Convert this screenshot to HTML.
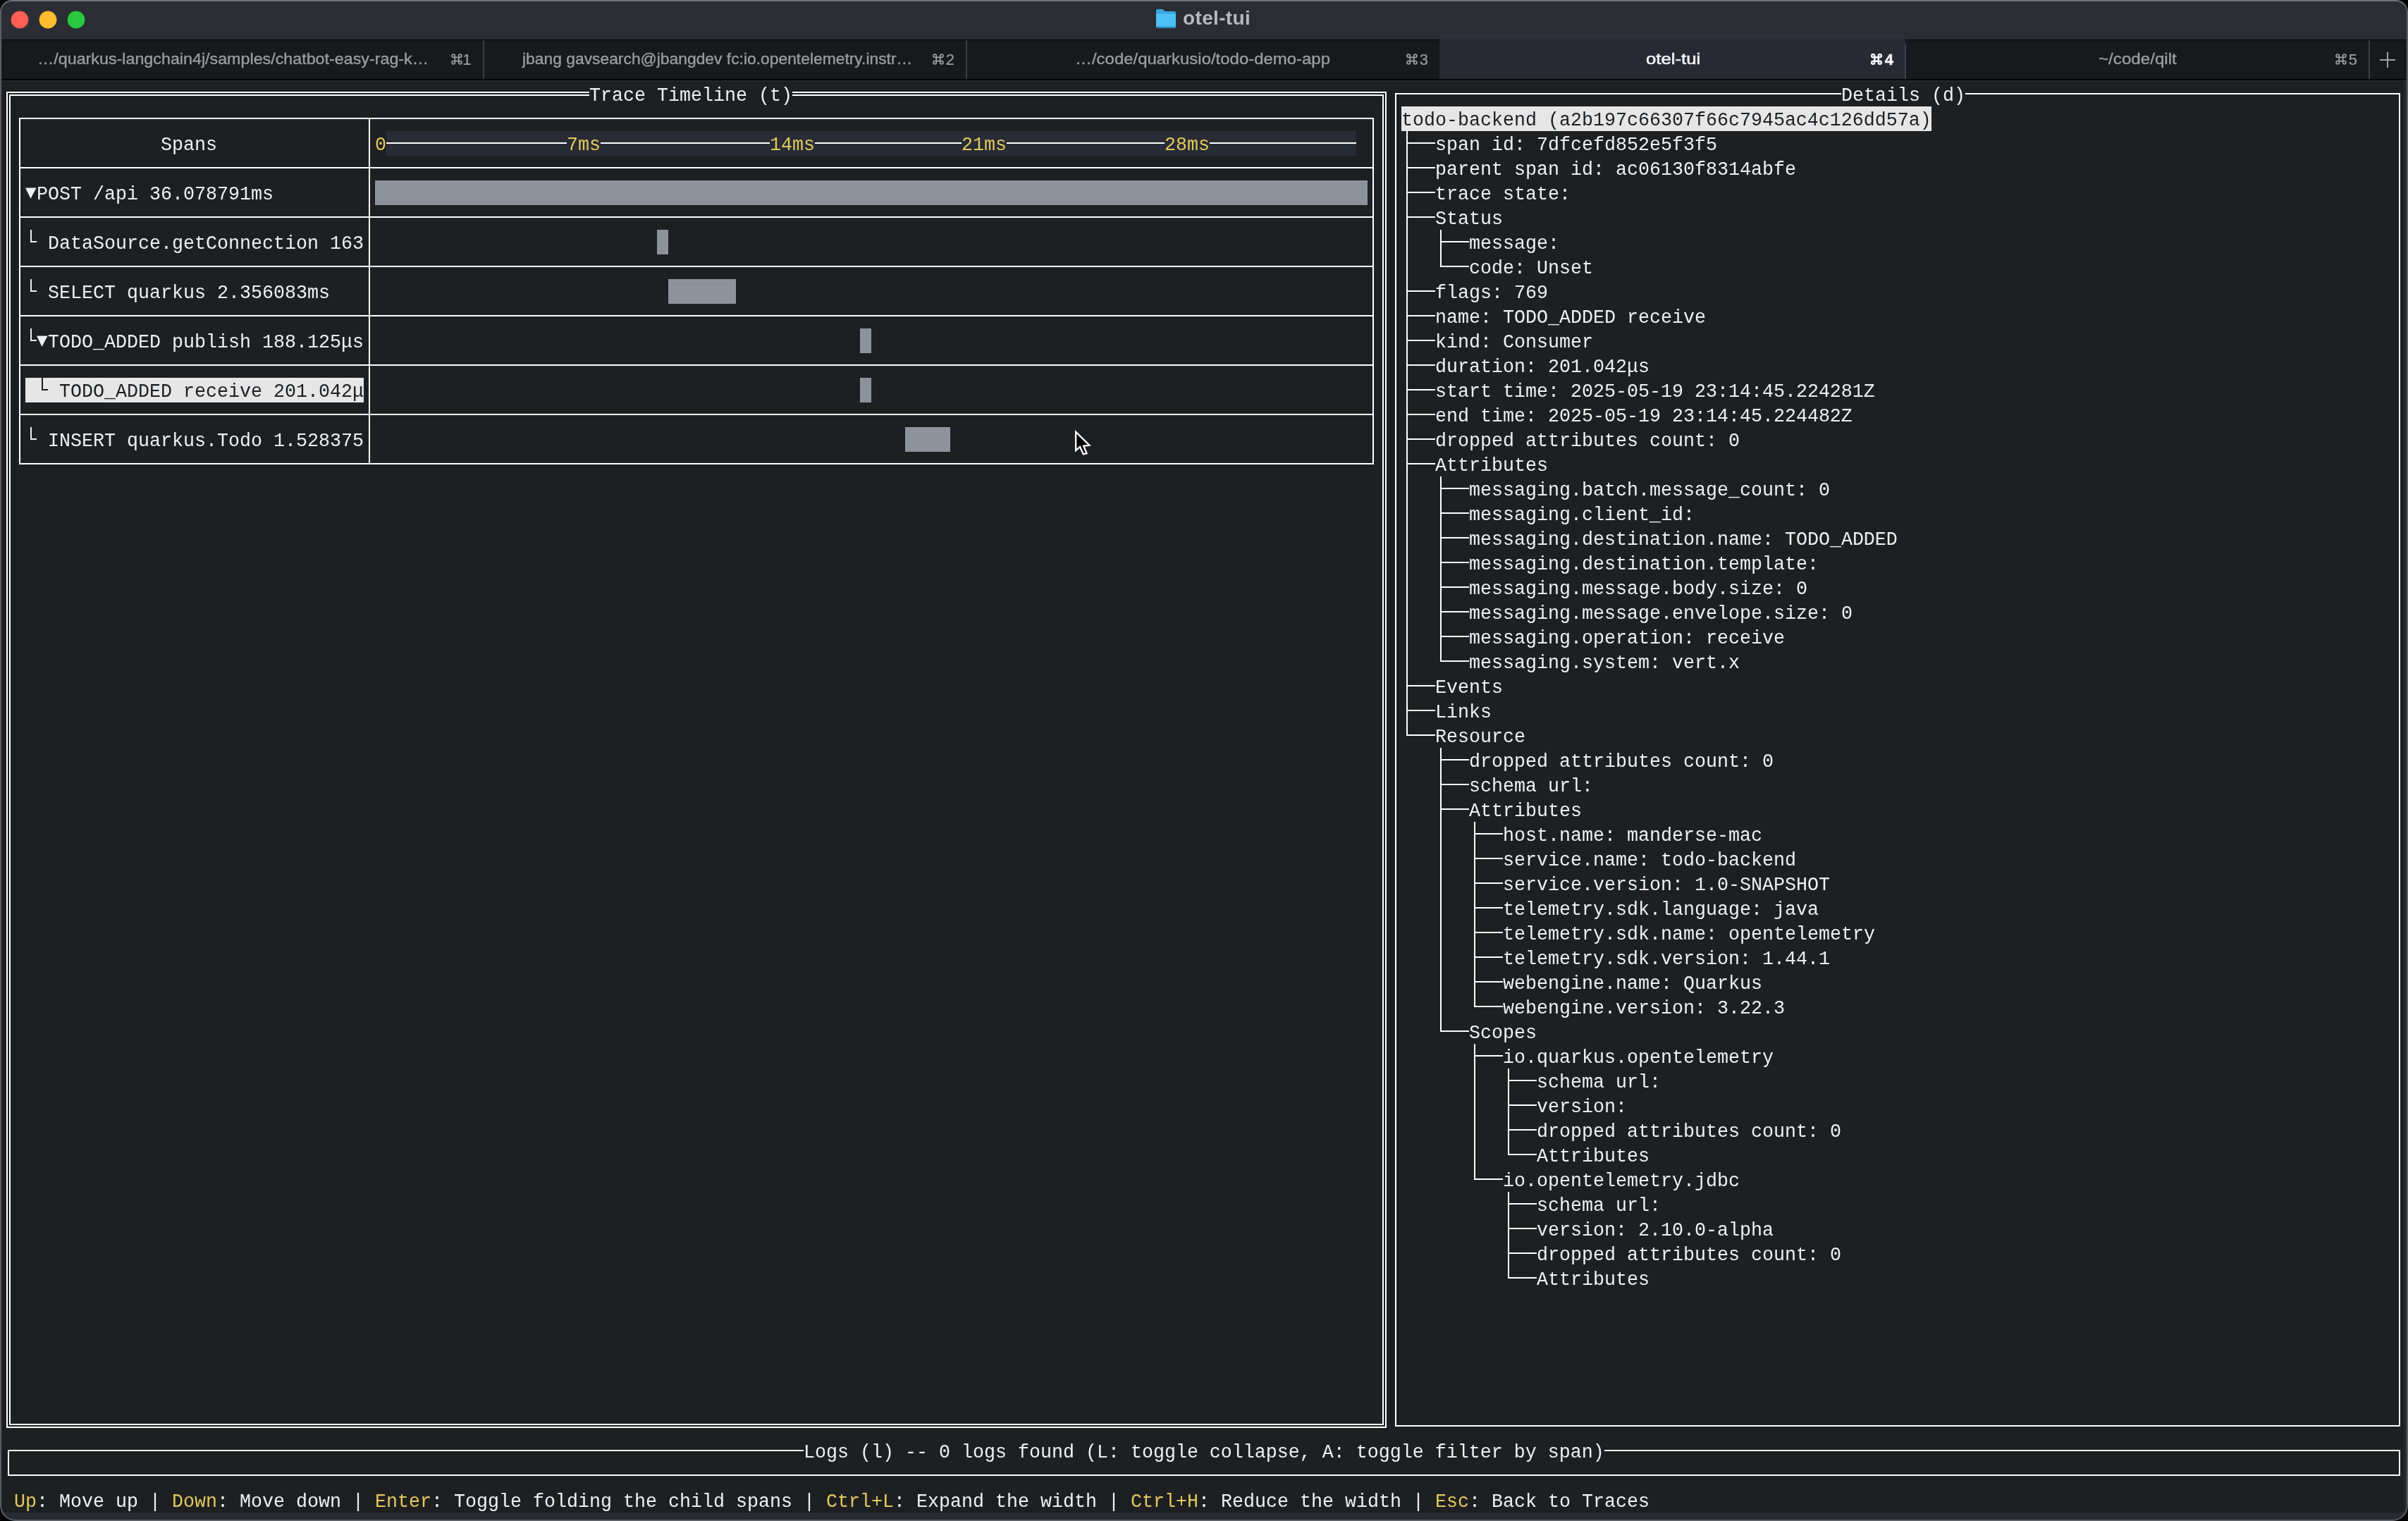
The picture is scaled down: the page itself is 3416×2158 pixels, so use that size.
<!DOCTYPE html>
<html><head><meta charset="utf-8">
<style>
html,body{margin:0;padding:0;background:#000;width:3416px;height:2158px;overflow:hidden}
#win{will-change:transform;position:absolute;left:0;top:0;width:3416px;height:2158px;border-radius:17px 17px 22px 22px;overflow:hidden;background:#1e1f21}
.l,.b,.t,.a{position:absolute}
.b{box-sizing:content-box}
.t{font-family:"Liberation Mono",monospace;font-size:26.6626px;line-height:35px;white-space:pre;height:35px;transform:translateY(2.8px) scaleY(1.05);transform-origin:0 24.5px}
.s{position:absolute;font-family:"Liberation Sans",sans-serif;white-space:pre}
</style></head><body><div id="win">
<div class="l" style="left:0;top:0;width:3416px;height:56px;background:#2a2d34"></div>
<div class="l" style="left:16px;top:16px;width:24px;height:24px;border-radius:50%;background:#ff5f57;box-shadow:0 0 0 0.5px #e0443e"></div>
<div class="l" style="left:56px;top:16px;width:24px;height:24px;border-radius:50%;background:#febc2e;box-shadow:0 0 0 0.5px #dea123"></div>
<div class="l" style="left:96px;top:16px;width:24px;height:24px;border-radius:50%;background:#28c840;box-shadow:0 0 0 0.5px #1aab29"></div>
<svg class="a" style="left:1638px;top:11px" width="32" height="30" viewBox="0 0 32 30"><path d="M2 4.5 Q2 2 4.5 2 H11.5 L14.5 5 H27.5 Q30 5 30 7.5 V9 H2 Z" fill="#3aa6de"/><path d="M2 8.5 H30 V26 Q30 28.5 27.5 28.5 H4.5 Q2 28.5 2 26 Z" fill="#4cc1f5"/><rect x="2" y="26.5" width="28" height="2" rx="1" fill="#2a8fc4"/></svg>
<div class="s" id="ttl" style="left:1678px;top:6px;font-size:28px;line-height:40px;font-weight:bold;letter-spacing:0.35px;color:#b7b9be">otel-tui</div>
<div class="l" style="left:0;top:56px;width:3416px;height:57px;background:#18191d"></div>
<div class="l" style="left:0;top:56px;width:3416px;height:1px;background:#050507"></div>
<div class="l" style="left:0;top:112px;width:3416px;height:1.5px;background:#050507"></div>
<div class="l" style="left:2042px;top:56px;width:661px;height:56px;background:#272a32"></div>
<div class="l" style="left:1370px;top:57px;width:2px;height:55px;background:#3b3c43"></div>
<div class="l" style="left:685px;top:57px;width:2px;height:55px;background:#3b3c43"></div>
<div class="l" style="left:2702px;top:63px;width:2px;height:49px;background:#3c4049"></div>
<div class="l" style="left:3360px;top:57px;width:2px;height:55px;background:#3b3c43"></div>
<div class="s tl" style="left:53px;top:63.9px;font-size:22.5px;line-height:40px;color:#9c9da2;-webkit-text-stroke:0.35px #9c9da2;transform-origin:0 0;transform:scaleX(1.0345)">…/quarkus-langchain4j/samples/chatbot-easy-rag-k…</div>
<svg class="a" style="left:640px;top:76px" width="16" height="16" viewBox="0 0 16 16"><path d="M5.3 5.3 V3.2 A2.1 2.1 0 1 0 3.2 5.3 H12.8 A2.1 2.1 0 1 0 10.7 3.2 V12.8 A2.1 2.1 0 1 0 12.8 10.7 H3.2 A2.1 2.1 0 1 0 5.3 12.8 Z" fill="none" stroke="#9c9da2" stroke-width="1.8"/></svg>
<div class="s" style="left:654.6px;top:69.5px;width:14px;text-align:right;font-size:22px;line-height:30px;color:#9c9da2;-webkit-text-stroke:0.2px #9c9da2;font-weight:normal">1</div>
<div class="s tl" style="left:741px;top:63.9px;font-size:22.5px;line-height:40px;color:#9c9da2;-webkit-text-stroke:0.35px #9c9da2;transform-origin:0 0;transform:scaleX(1.015)">jbang gavsearch@jbangdev fc:io.opentelemetry.instr…</div>
<svg class="a" style="left:1322.6px;top:76px" width="16" height="16" viewBox="0 0 16 16"><path d="M5.3 5.3 V3.2 A2.1 2.1 0 1 0 3.2 5.3 H12.8 A2.1 2.1 0 1 0 10.7 3.2 V12.8 A2.1 2.1 0 1 0 12.8 10.7 H3.2 A2.1 2.1 0 1 0 5.3 12.8 Z" fill="none" stroke="#9c9da2" stroke-width="1.8"/></svg>
<div class="s" style="left:1340px;top:69.5px;width:14px;text-align:right;font-size:22px;line-height:30px;color:#9c9da2;-webkit-text-stroke:0.2px #9c9da2;font-weight:normal">2</div>
<div class="s tl" style="left:1525px;top:63.9px;font-size:22.5px;line-height:40px;color:#9c9da2;-webkit-text-stroke:0.35px #9c9da2;transform-origin:0 0;transform:scaleX(1.064)">…/code/quarkusio/todo-demo-app</div>
<svg class="a" style="left:1994.9px;top:76px" width="16" height="16" viewBox="0 0 16 16"><path d="M5.3 5.3 V3.2 A2.1 2.1 0 1 0 3.2 5.3 H12.8 A2.1 2.1 0 1 0 10.7 3.2 V12.8 A2.1 2.1 0 1 0 12.8 10.7 H3.2 A2.1 2.1 0 1 0 5.3 12.8 Z" fill="none" stroke="#9c9da2" stroke-width="1.8"/></svg>
<div class="s" style="left:2012px;top:69.5px;width:14px;text-align:right;font-size:22px;line-height:30px;color:#9c9da2;-webkit-text-stroke:0.2px #9c9da2;font-weight:normal">3</div>
<div class="s tl" style="left:2335.4px;top:63.9px;font-size:22.5px;line-height:40px;color:#f2f2f4;-webkit-text-stroke:0.6px #f2f2f4;transform-origin:0 0;transform:scaleX(1.144)">otel-tui</div>
<svg class="a" style="left:2653.6px;top:76px" width="16" height="16" viewBox="0 0 16 16"><path d="M5.3 5.3 V3.2 A2.1 2.1 0 1 0 3.2 5.3 H12.8 A2.1 2.1 0 1 0 10.7 3.2 V12.8 A2.1 2.1 0 1 0 12.8 10.7 H3.2 A2.1 2.1 0 1 0 5.3 12.8 Z" fill="none" stroke="#f7f7f9" stroke-width="2.5"/></svg>
<div class="s" style="left:2672px;top:69.5px;width:14px;text-align:right;font-size:22px;line-height:30px;color:#f7f7f9;-webkit-text-stroke:0.5px #f7f7f9;font-weight:bold">4</div>
<div class="s tl" style="left:2976.7px;top:63.9px;font-size:22.5px;line-height:40px;color:#9c9da2;-webkit-text-stroke:0.35px #9c9da2;transform-origin:0 0;transform:scaleX(1.0736)">~/code/qilt</div>
<svg class="a" style="left:3312.5px;top:76px" width="16" height="16" viewBox="0 0 16 16"><path d="M5.3 5.3 V3.2 A2.1 2.1 0 1 0 3.2 5.3 H12.8 A2.1 2.1 0 1 0 10.7 3.2 V12.8 A2.1 2.1 0 1 0 12.8 10.7 H3.2 A2.1 2.1 0 1 0 5.3 12.8 Z" fill="none" stroke="#9c9da2" stroke-width="1.8"/></svg>
<div class="s" style="left:3330px;top:69.5px;width:14px;text-align:right;font-size:22px;line-height:30px;color:#9c9da2;-webkit-text-stroke:0.2px #9c9da2;font-weight:normal">5</div>
<div class="l" style="left:3376px;top:83.5px;width:22px;height:2px;background:#a0a1a6"></div>
<div class="l" style="left:3386px;top:73.5px;width:2px;height:22px;background:#a0a1a6"></div>
<div class="l" style="left:0;top:113.5px;width:3416px;height:2px;background:#26272b"></div>
<div class="l" style="left:3410px;top:113px;width:4px;height:2033px;background:#25282d"></div>
<div class="l" style="left:0;top:2145.5px;width:3416px;height:12.5px;background:#282b32"></div>
<div class="b" style="left:9.00px;top:130.00px;width:1954.00px;height:1892.00px;border:2px solid #ffffff"></div>
<div class="b" style="left:13.00px;top:134.00px;width:1946.00px;height:1884.00px;border:2px solid #ffffff"></div>
<div class="t" style="left:836.00px;top:115.50px;color:#f0f0f0;background:#1e1f21;">Trace Timeline (t)</div>
<div class="b" style="left:27.00px;top:167.00px;width:1918.00px;height:488.00px;border:2px solid #ffffff"></div>
<div class="l" style="left:523.00px;top:168.00px;width:2px;height:490.00px;background:#ffffff"></div>
<div class="l" style="left:28.00px;top:237.00px;width:1920.00px;height:2px;background:#ffffff"></div>
<div class="l" style="left:28.00px;top:307.00px;width:1920.00px;height:2px;background:#ffffff"></div>
<div class="l" style="left:28.00px;top:377.00px;width:1920.00px;height:2px;background:#ffffff"></div>
<div class="l" style="left:28.00px;top:447.00px;width:1920.00px;height:2px;background:#ffffff"></div>
<div class="l" style="left:28.00px;top:517.00px;width:1920.00px;height:2px;background:#ffffff"></div>
<div class="l" style="left:28.00px;top:587.00px;width:1920.00px;height:2px;background:#ffffff"></div>
<div class="t" style="left:228.00px;top:185.50px;color:#f0f0f0;">Spans</div>
<div class="l" style="left:548.00px;top:185.50px;width:1376.00px;height:35.00px;background:#282c34"></div>
<div class="t" style="left:532.00px;top:185.50px;color:#e2c95e;">0</div>
<div class="l" style="left:548.00px;top:202.00px;width:256.00px;height:2px;background:#ffffff"></div>
<div class="l" style="left:852.00px;top:202.00px;width:240.00px;height:2px;background:#ffffff"></div>
<div class="l" style="left:1156.00px;top:202.00px;width:208.00px;height:2px;background:#ffffff"></div>
<div class="l" style="left:1428.00px;top:202.00px;width:224.00px;height:2px;background:#ffffff"></div>
<div class="l" style="left:1716.00px;top:202.00px;width:208.00px;height:2px;background:#ffffff"></div>
<div class="t" style="left:804.00px;top:185.50px;color:#e2c95e;">7ms</div>
<div class="t" style="left:1092.00px;top:185.50px;color:#e2c95e;">14ms</div>
<div class="t" style="left:1364.00px;top:185.50px;color:#e2c95e;">21ms</div>
<div class="t" style="left:1652.00px;top:185.50px;color:#e2c95e;">28ms</div>
<svg class="a" style="left:36.00px;top:255.50px" width="16" height="35" viewBox="0 0 16 35"><path d="M0 10.4 H15.6 L7.5 25.8 Z" fill="#f0f0f0"/></svg>
<div class="t" style="left:52.00px;top:255.50px;color:#f0f0f0;">POST /api 36.078791ms</div>
<div class="l" style="left:532.00px;top:255.50px;width:1408.00px;height:35.00px;background:#8e939b"></div>
<div class="l" style="left:42.80px;top:325.90px;width:2.5px;height:18.4px;background:#f0f0f0"></div>
<div class="l" style="left:42.80px;top:342.00px;width:9.4px;height:2.3px;background:#f0f0f0"></div>
<div class="t" style="left:68.00px;top:325.50px;color:#f0f0f0;">DataSource.getConnection 163</div>
<div class="l" style="left:932.00px;top:325.50px;width:16.00px;height:35.00px;background:#8e939b"></div>
<div class="l" style="left:42.80px;top:395.90px;width:2.5px;height:18.4px;background:#f0f0f0"></div>
<div class="l" style="left:42.80px;top:412.00px;width:9.4px;height:2.3px;background:#f0f0f0"></div>
<div class="t" style="left:68.00px;top:395.50px;color:#f0f0f0;">SELECT quarkus 2.356083ms</div>
<div class="l" style="left:948.00px;top:395.50px;width:96.00px;height:35.00px;background:#8e939b"></div>
<div class="l" style="left:42.80px;top:465.90px;width:2.5px;height:18.4px;background:#f0f0f0"></div>
<div class="l" style="left:42.80px;top:482.00px;width:9.4px;height:2.3px;background:#f0f0f0"></div>
<svg class="a" style="left:52.00px;top:465.50px" width="16" height="35" viewBox="0 0 16 35"><path d="M0 10.4 H15.6 L7.5 25.8 Z" fill="#f0f0f0"/></svg>
<div class="t" style="left:68.00px;top:465.50px;color:#f0f0f0;">TODO_ADDED publish 188.125μs</div>
<div class="l" style="left:1220.00px;top:465.50px;width:16.00px;height:35.00px;background:#8e939b"></div>
<div class="l" style="left:36.00px;top:535.50px;width:480.00px;height:35.00px;background:#e6e6e6"></div>
<div class="l" style="left:58.80px;top:535.90px;width:2.5px;height:18.4px;background:#1e1f21"></div>
<div class="l" style="left:58.80px;top:552.00px;width:9.4px;height:2.3px;background:#1e1f21"></div>
<div class="t" style="left:84.00px;top:535.50px;color:#1e1f21;">TODO_ADDED receive 201.042μ</div>
<div class="l" style="left:1220.00px;top:535.50px;width:16.00px;height:35.00px;background:#8e939b"></div>
<div class="l" style="left:42.80px;top:605.90px;width:2.5px;height:18.4px;background:#f0f0f0"></div>
<div class="l" style="left:42.80px;top:622.00px;width:9.4px;height:2.3px;background:#f0f0f0"></div>
<div class="t" style="left:68.00px;top:605.50px;color:#f0f0f0;">INSERT quarkus.Todo 1.528375</div>
<div class="l" style="left:1284.00px;top:605.50px;width:64.00px;height:35.00px;background:#8e939b"></div>
<div class="b" style="left:1979.00px;top:132.00px;width:1422.00px;height:1888.00px;border:2px solid #ffffff"></div>
<div class="t" style="left:2612.00px;top:115.50px;color:#f0f0f0;background:#1e1f21;">Details (d)</div>
<div class="l" style="left:1988.00px;top:150.50px;width:752.00px;height:35.00px;background:#e6e6e6"></div>
<div class="t" style="left:1988.00px;top:150.50px;color:#1e1f21;">todo-backend (a2b197c66307f66c7945ac4c126dd57a)</div>
<div class="t" style="left:2036.00px;top:185.50px;color:#f0f0f0;">span id: 7dfcefd852e5f3f5</div>
<div class="l" style="left:1995.00px;top:202.00px;width:41.00px;height:2px;background:#ffffff"></div>
<div class="t" style="left:2036.00px;top:220.50px;color:#f0f0f0;">parent span id: ac06130f8314abfe</div>
<div class="l" style="left:1995.00px;top:237.00px;width:41.00px;height:2px;background:#ffffff"></div>
<div class="t" style="left:2036.00px;top:255.50px;color:#f0f0f0;">trace state: </div>
<div class="l" style="left:1995.00px;top:272.00px;width:41.00px;height:2px;background:#ffffff"></div>
<div class="t" style="left:2036.00px;top:290.50px;color:#f0f0f0;">Status</div>
<div class="l" style="left:1995.00px;top:307.00px;width:41.00px;height:2px;background:#ffffff"></div>
<div class="t" style="left:2084.00px;top:325.50px;color:#f0f0f0;">message: </div>
<div class="l" style="left:2043.00px;top:342.00px;width:41.00px;height:2px;background:#ffffff"></div>
<div class="t" style="left:2084.00px;top:360.50px;color:#f0f0f0;">code: Unset</div>
<div class="l" style="left:2043.00px;top:377.00px;width:41.00px;height:2px;background:#ffffff"></div>
<div class="t" style="left:2036.00px;top:395.50px;color:#f0f0f0;">flags: 769</div>
<div class="l" style="left:1995.00px;top:412.00px;width:41.00px;height:2px;background:#ffffff"></div>
<div class="t" style="left:2036.00px;top:430.50px;color:#f0f0f0;">name: TODO_ADDED receive</div>
<div class="l" style="left:1995.00px;top:447.00px;width:41.00px;height:2px;background:#ffffff"></div>
<div class="t" style="left:2036.00px;top:465.50px;color:#f0f0f0;">kind: Consumer</div>
<div class="l" style="left:1995.00px;top:482.00px;width:41.00px;height:2px;background:#ffffff"></div>
<div class="t" style="left:2036.00px;top:500.50px;color:#f0f0f0;">duration: 201.042μs</div>
<div class="l" style="left:1995.00px;top:517.00px;width:41.00px;height:2px;background:#ffffff"></div>
<div class="t" style="left:2036.00px;top:535.50px;color:#f0f0f0;">start time: 2025-05-19 23:14:45.224281Z</div>
<div class="l" style="left:1995.00px;top:552.00px;width:41.00px;height:2px;background:#ffffff"></div>
<div class="t" style="left:2036.00px;top:570.50px;color:#f0f0f0;">end time: 2025-05-19 23:14:45.224482Z</div>
<div class="l" style="left:1995.00px;top:587.00px;width:41.00px;height:2px;background:#ffffff"></div>
<div class="t" style="left:2036.00px;top:605.50px;color:#f0f0f0;">dropped attributes count: 0</div>
<div class="l" style="left:1995.00px;top:622.00px;width:41.00px;height:2px;background:#ffffff"></div>
<div class="t" style="left:2036.00px;top:640.50px;color:#f0f0f0;">Attributes</div>
<div class="l" style="left:1995.00px;top:657.00px;width:41.00px;height:2px;background:#ffffff"></div>
<div class="t" style="left:2084.00px;top:675.50px;color:#f0f0f0;">messaging.batch.message_count: 0</div>
<div class="l" style="left:2043.00px;top:692.00px;width:41.00px;height:2px;background:#ffffff"></div>
<div class="t" style="left:2084.00px;top:710.50px;color:#f0f0f0;">messaging.client_id: </div>
<div class="l" style="left:2043.00px;top:727.00px;width:41.00px;height:2px;background:#ffffff"></div>
<div class="t" style="left:2084.00px;top:745.50px;color:#f0f0f0;">messaging.destination.name: TODO_ADDED</div>
<div class="l" style="left:2043.00px;top:762.00px;width:41.00px;height:2px;background:#ffffff"></div>
<div class="t" style="left:2084.00px;top:780.50px;color:#f0f0f0;">messaging.destination.template: </div>
<div class="l" style="left:2043.00px;top:797.00px;width:41.00px;height:2px;background:#ffffff"></div>
<div class="t" style="left:2084.00px;top:815.50px;color:#f0f0f0;">messaging.message.body.size: 0</div>
<div class="l" style="left:2043.00px;top:832.00px;width:41.00px;height:2px;background:#ffffff"></div>
<div class="t" style="left:2084.00px;top:850.50px;color:#f0f0f0;">messaging.message.envelope.size: 0</div>
<div class="l" style="left:2043.00px;top:867.00px;width:41.00px;height:2px;background:#ffffff"></div>
<div class="t" style="left:2084.00px;top:885.50px;color:#f0f0f0;">messaging.operation: receive</div>
<div class="l" style="left:2043.00px;top:902.00px;width:41.00px;height:2px;background:#ffffff"></div>
<div class="t" style="left:2084.00px;top:920.50px;color:#f0f0f0;">messaging.system: vert.x</div>
<div class="l" style="left:2043.00px;top:937.00px;width:41.00px;height:2px;background:#ffffff"></div>
<div class="t" style="left:2036.00px;top:955.50px;color:#f0f0f0;">Events</div>
<div class="l" style="left:1995.00px;top:972.00px;width:41.00px;height:2px;background:#ffffff"></div>
<div class="t" style="left:2036.00px;top:990.50px;color:#f0f0f0;">Links</div>
<div class="l" style="left:1995.00px;top:1007.00px;width:41.00px;height:2px;background:#ffffff"></div>
<div class="t" style="left:2036.00px;top:1025.50px;color:#f0f0f0;">Resource</div>
<div class="l" style="left:1995.00px;top:1042.00px;width:41.00px;height:2px;background:#ffffff"></div>
<div class="t" style="left:2084.00px;top:1060.50px;color:#f0f0f0;">dropped attributes count: 0</div>
<div class="l" style="left:2043.00px;top:1077.00px;width:41.00px;height:2px;background:#ffffff"></div>
<div class="t" style="left:2084.00px;top:1095.50px;color:#f0f0f0;">schema url: </div>
<div class="l" style="left:2043.00px;top:1112.00px;width:41.00px;height:2px;background:#ffffff"></div>
<div class="t" style="left:2084.00px;top:1130.50px;color:#f0f0f0;">Attributes</div>
<div class="l" style="left:2043.00px;top:1147.00px;width:41.00px;height:2px;background:#ffffff"></div>
<div class="t" style="left:2132.00px;top:1165.50px;color:#f0f0f0;">host.name: manderse-mac</div>
<div class="l" style="left:2091.00px;top:1182.00px;width:41.00px;height:2px;background:#ffffff"></div>
<div class="t" style="left:2132.00px;top:1200.50px;color:#f0f0f0;">service.name: todo-backend</div>
<div class="l" style="left:2091.00px;top:1217.00px;width:41.00px;height:2px;background:#ffffff"></div>
<div class="t" style="left:2132.00px;top:1235.50px;color:#f0f0f0;">service.version: 1.0-SNAPSHOT</div>
<div class="l" style="left:2091.00px;top:1252.00px;width:41.00px;height:2px;background:#ffffff"></div>
<div class="t" style="left:2132.00px;top:1270.50px;color:#f0f0f0;">telemetry.sdk.language: java</div>
<div class="l" style="left:2091.00px;top:1287.00px;width:41.00px;height:2px;background:#ffffff"></div>
<div class="t" style="left:2132.00px;top:1305.50px;color:#f0f0f0;">telemetry.sdk.name: opentelemetry</div>
<div class="l" style="left:2091.00px;top:1322.00px;width:41.00px;height:2px;background:#ffffff"></div>
<div class="t" style="left:2132.00px;top:1340.50px;color:#f0f0f0;">telemetry.sdk.version: 1.44.1</div>
<div class="l" style="left:2091.00px;top:1357.00px;width:41.00px;height:2px;background:#ffffff"></div>
<div class="t" style="left:2132.00px;top:1375.50px;color:#f0f0f0;">webengine.name: Quarkus</div>
<div class="l" style="left:2091.00px;top:1392.00px;width:41.00px;height:2px;background:#ffffff"></div>
<div class="t" style="left:2132.00px;top:1410.50px;color:#f0f0f0;">webengine.version: 3.22.3</div>
<div class="l" style="left:2091.00px;top:1427.00px;width:41.00px;height:2px;background:#ffffff"></div>
<div class="t" style="left:2084.00px;top:1445.50px;color:#f0f0f0;">Scopes</div>
<div class="l" style="left:2043.00px;top:1462.00px;width:41.00px;height:2px;background:#ffffff"></div>
<div class="t" style="left:2132.00px;top:1480.50px;color:#f0f0f0;">io.quarkus.opentelemetry</div>
<div class="l" style="left:2091.00px;top:1497.00px;width:41.00px;height:2px;background:#ffffff"></div>
<div class="t" style="left:2180.00px;top:1515.50px;color:#f0f0f0;">schema url: </div>
<div class="l" style="left:2139.00px;top:1532.00px;width:41.00px;height:2px;background:#ffffff"></div>
<div class="t" style="left:2180.00px;top:1550.50px;color:#f0f0f0;">version: </div>
<div class="l" style="left:2139.00px;top:1567.00px;width:41.00px;height:2px;background:#ffffff"></div>
<div class="t" style="left:2180.00px;top:1585.50px;color:#f0f0f0;">dropped attributes count: 0</div>
<div class="l" style="left:2139.00px;top:1602.00px;width:41.00px;height:2px;background:#ffffff"></div>
<div class="t" style="left:2180.00px;top:1620.50px;color:#f0f0f0;">Attributes</div>
<div class="l" style="left:2139.00px;top:1637.00px;width:41.00px;height:2px;background:#ffffff"></div>
<div class="t" style="left:2132.00px;top:1655.50px;color:#f0f0f0;">io.opentelemetry.jdbc</div>
<div class="l" style="left:2091.00px;top:1672.00px;width:41.00px;height:2px;background:#ffffff"></div>
<div class="t" style="left:2180.00px;top:1690.50px;color:#f0f0f0;">schema url: </div>
<div class="l" style="left:2139.00px;top:1707.00px;width:41.00px;height:2px;background:#ffffff"></div>
<div class="t" style="left:2180.00px;top:1725.50px;color:#f0f0f0;">version: 2.10.0-alpha</div>
<div class="l" style="left:2139.00px;top:1742.00px;width:41.00px;height:2px;background:#ffffff"></div>
<div class="t" style="left:2180.00px;top:1760.50px;color:#f0f0f0;">dropped attributes count: 0</div>
<div class="l" style="left:2139.00px;top:1777.00px;width:41.00px;height:2px;background:#ffffff"></div>
<div class="t" style="left:2180.00px;top:1795.50px;color:#f0f0f0;">Attributes</div>
<div class="l" style="left:2139.00px;top:1812.00px;width:41.00px;height:2px;background:#ffffff"></div>
<div class="l" style="left:1995.00px;top:185.50px;width:2px;height:858.50px;background:#ffffff"></div>
<div class="l" style="left:2043.00px;top:325.50px;width:2px;height:53.50px;background:#ffffff"></div>
<div class="l" style="left:2043.00px;top:675.50px;width:2px;height:263.50px;background:#ffffff"></div>
<div class="l" style="left:2043.00px;top:1060.50px;width:2px;height:403.50px;background:#ffffff"></div>
<div class="l" style="left:2091.00px;top:1165.50px;width:2px;height:263.50px;background:#ffffff"></div>
<div class="l" style="left:2091.00px;top:1480.50px;width:2px;height:193.50px;background:#ffffff"></div>
<div class="l" style="left:2139.00px;top:1515.50px;width:2px;height:123.50px;background:#ffffff"></div>
<div class="l" style="left:2139.00px;top:1690.50px;width:2px;height:123.50px;background:#ffffff"></div>
<div class="b" style="left:11.00px;top:2057.00px;width:3390.00px;height:33.00px;border:2px solid #ffffff"></div>
<div class="t" style="left:1140.00px;top:2040.50px;color:#f0f0f0;background:#1e1f21;">Logs (l) -- 0 logs found (L: toggle collapse, A: toggle filter by span)</div>
<div class="t" style="left:20.00px;top:2110.50px;color:#e2c95e;">Up</div>
<div class="t" style="left:52.00px;top:2110.50px;color:#f0f0f0;">: Move up | </div>
<div class="t" style="left:244.00px;top:2110.50px;color:#e2c95e;">Down</div>
<div class="t" style="left:308.00px;top:2110.50px;color:#f0f0f0;">: Move down | </div>
<div class="t" style="left:532.00px;top:2110.50px;color:#e2c95e;">Enter</div>
<div class="t" style="left:612.00px;top:2110.50px;color:#f0f0f0;">: Toggle folding the child spans | </div>
<div class="t" style="left:1172.00px;top:2110.50px;color:#e2c95e;">Ctrl+L</div>
<div class="t" style="left:1268.00px;top:2110.50px;color:#f0f0f0;">: Expand the width | </div>
<div class="t" style="left:1604.00px;top:2110.50px;color:#e2c95e;">Ctrl+H</div>
<div class="t" style="left:1700.00px;top:2110.50px;color:#f0f0f0;">: Reduce the width | </div>
<div class="t" style="left:2036.00px;top:2110.50px;color:#e2c95e;">Esc</div>
<div class="t" style="left:2084.00px;top:2110.50px;color:#f0f0f0;">: Back to Traces</div>
<svg class="a" style="left:1515px;top:600px" width="45" height="55" viewBox="1515 600 45 55"><defs><clipPath id="cc"><path d="M1525 610 L1525 641.8 L1531.6 635.8 L1536.3 645.8 L1543.1 643.9 L1538.9 633.7 L1547.9 632.6 Z"/></clipPath></defs><path d="M1525 610 L1525 641.8 L1531.6 635.8 L1536.3 645.8 L1543.1 643.9 L1538.9 633.7 L1547.9 632.6 Z" fill="#000" stroke="#fff" stroke-width="4.6" clip-path="url(#cc)"/></svg>
<div class="a" style="left:0;top:0;width:3412px;height:2154px;border:2px solid #5c5f66;border-top-color:#6f7279;border-radius:17px 17px 22px 22px;pointer-events:none"></div>
</div></body></html>
